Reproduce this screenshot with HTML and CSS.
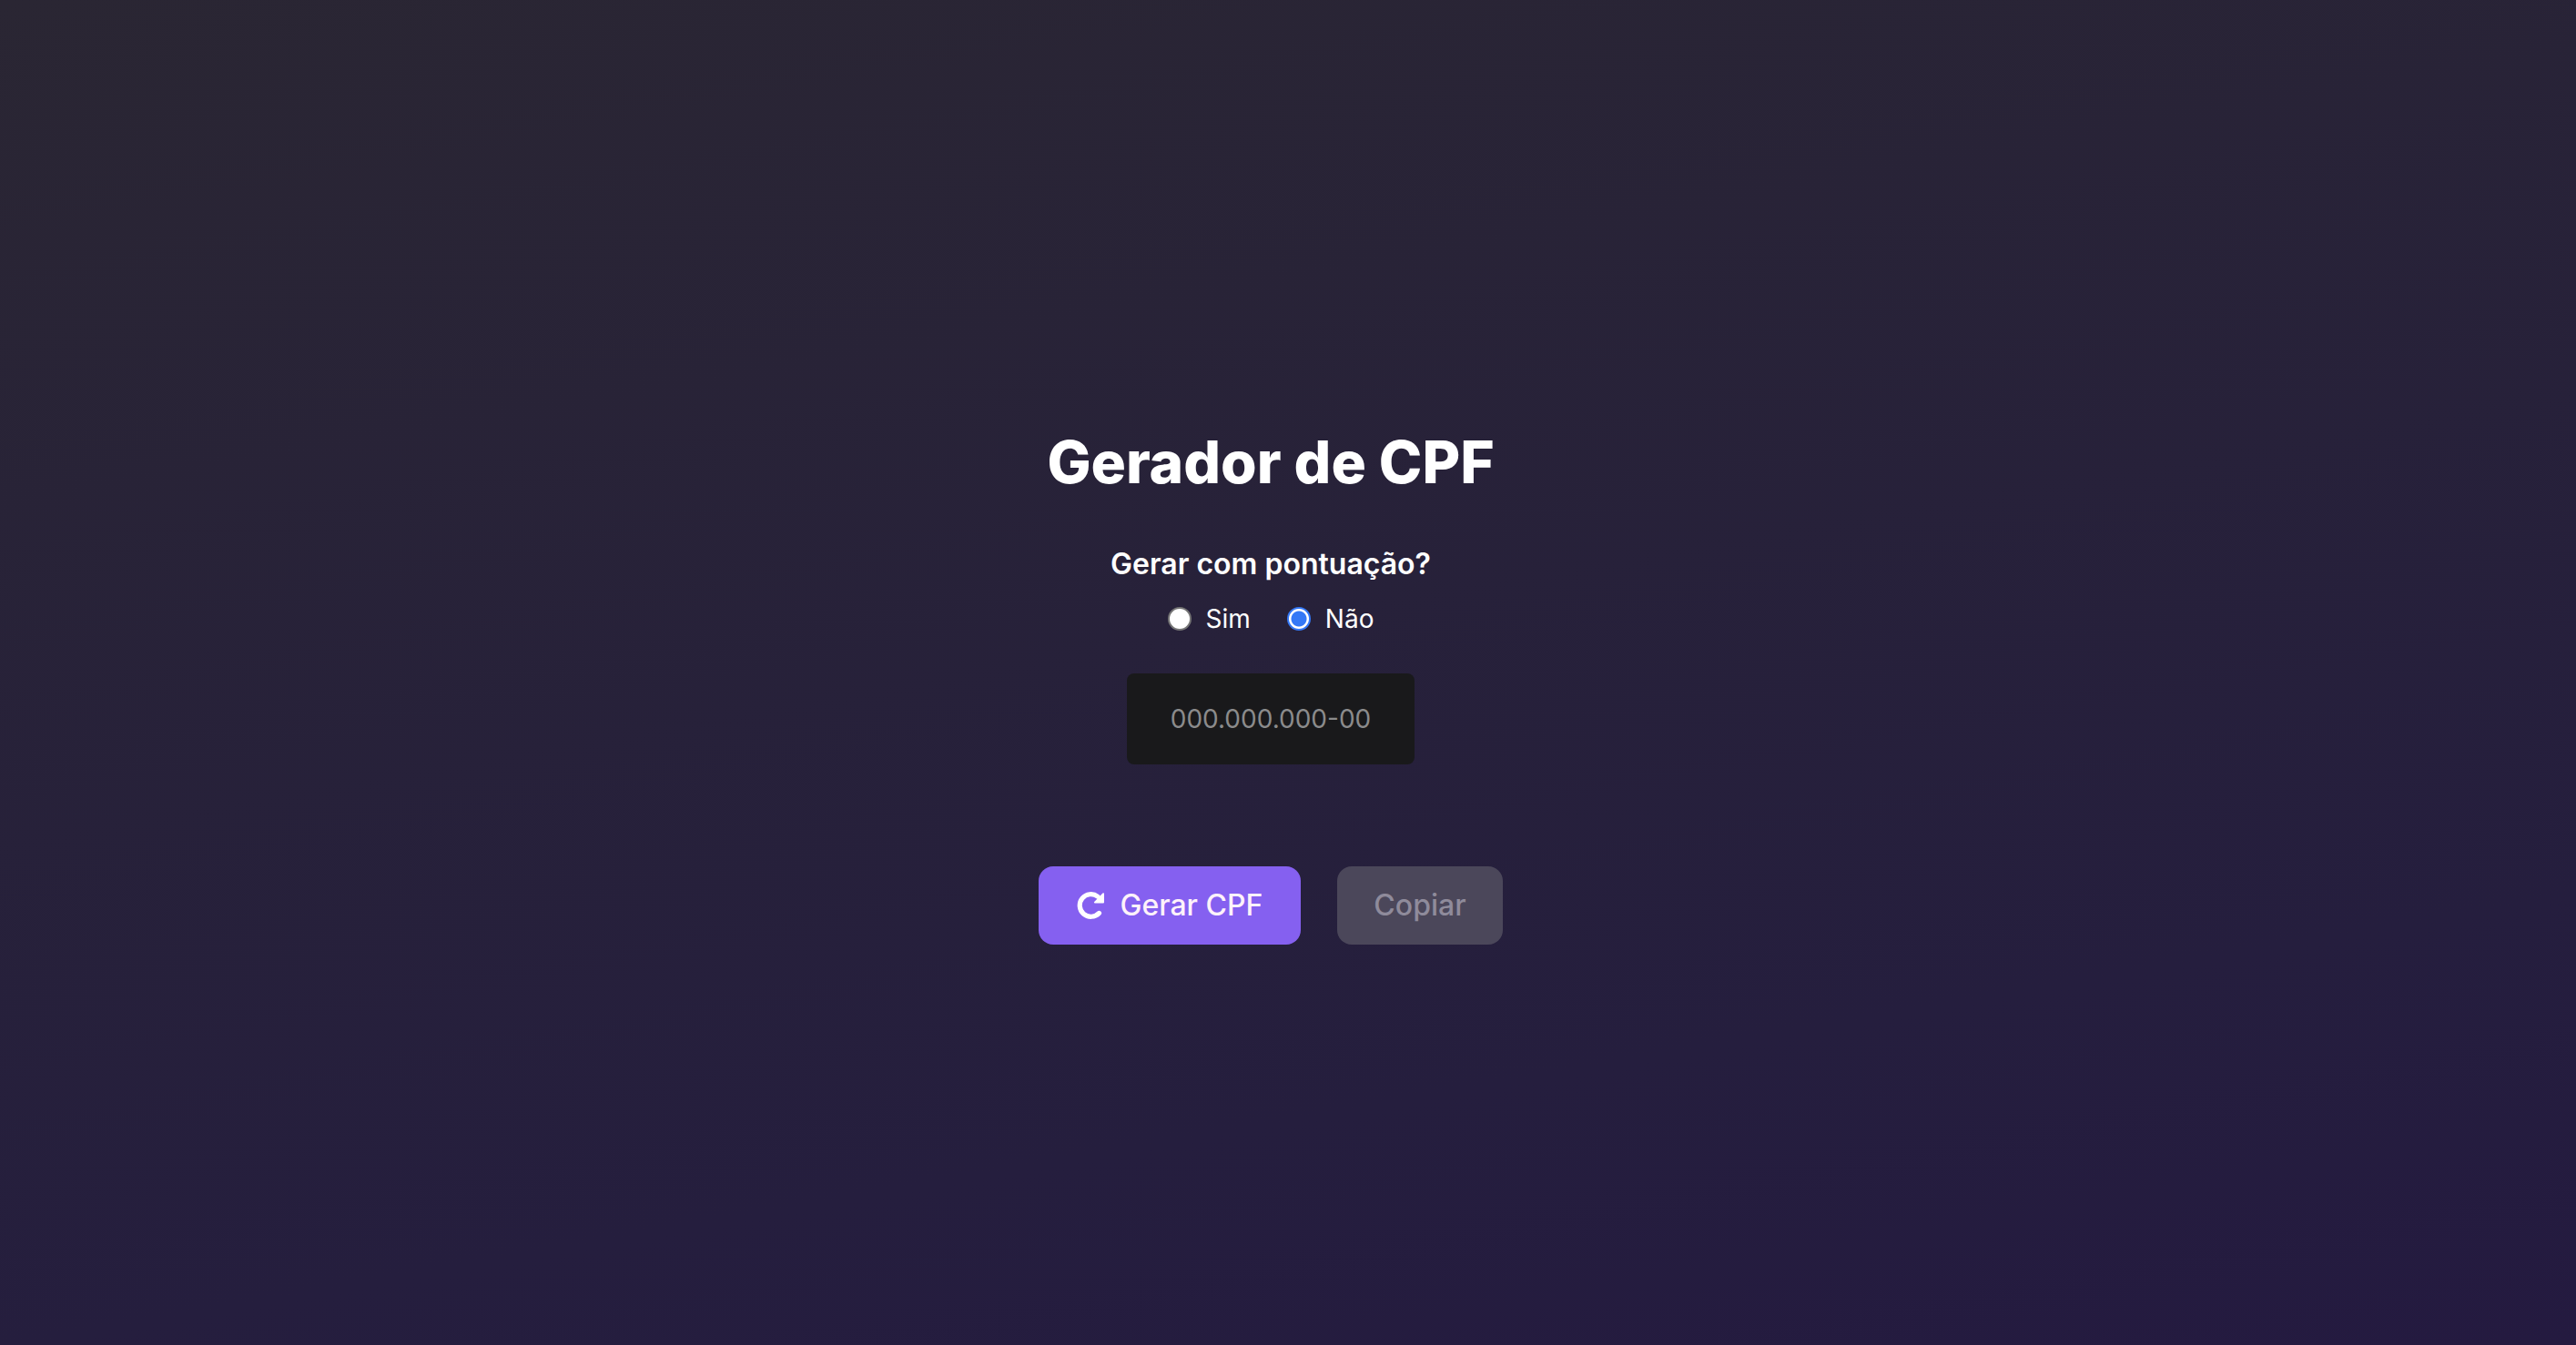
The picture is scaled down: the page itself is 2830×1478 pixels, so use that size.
FILE: index.html
```html
<!DOCTYPE html>
<html lang="pt-BR">
<head>
<meta charset="utf-8">
<meta name="viewport" content="width=device-width, initial-scale=1">
<title>Gerador de CPF</title>
<link rel="stylesheet" href="styles.css">
</head>
<body>
<main class="generator">
  <h1 class="title">Gerador de CPF</h1>
  <form class="form">
    <fieldset class="options">
      <legend class="question">Gerar com pontuação?</legend>
      <div class="choices">
        <label class="choice"><input class="radio" type="radio" name="mask" value="sim">Sim</label>
        <label class="choice"><input class="radio" type="radio" name="mask" value="nao" checked>Não</label>
      </div>
    </fieldset>
    <input class="cpf" type="text" placeholder="000.000.000-00" aria-label="CPF gerado" readonly>
    <div class="actions">
      <button class="button primary" type="button">
        <svg class="icon" viewBox="0 0 30 30" aria-hidden="true">
          <path d="M24.5 23.4A12.3 12.3 0 1 1 23 5.2" fill="none" stroke="currentColor" stroke-width="5.2" stroke-linecap="round"/>
          <path d="M28.4 1.5Q30 .6 30 2.2V11.4Q30 12.4 29 12.4H19.8Q18.1 12.3 19.2 11Z" fill="currentColor"/>
        </svg>
        Gerar CPF
      </button>
      <button class="button secondary" type="button" disabled>Copiar</button>
    </div>
  </form>
</main>
</body>
</html>
```
FILE: styles.css
```css
* {
  box-sizing: border-box;
}

body {
  margin: 0;
  min-height: 100vh;
  display: flex;
  align-items: center;
  justify-content: center;
  padding: 0 38px 0 0;
  background: linear-gradient(170deg, #2a2633, #251e3e 75%, #241a40);
  color: #fff;
  font-family: Inter, "Liberation Sans", sans-serif;
}

.generator,
.form {
  display: flex;
  flex-direction: column;
  align-items: center;
}

.generator {
  padding-top: 28px;
}

.title {
  margin: 0 0 52px;
  font-size: 64px;
  font-weight: 800;
  line-height: 80px;
}

.options {
  display: flex;
  flex-direction: column;
  align-items: center;
  margin: 0 0 40px;
  padding: 0;
  border: 0;
}

.question {
  padding: 0;
  font-size: 32px;
  font-weight: 600;
  line-height: 40px;
}

.choices {
  display: flex;
  gap: 40px;
  margin-top: 20px;
}

.choice {
  display: flex;
  align-items: center;
  gap: 16px;
  font-size: 28px;
  line-height: 40px;
}

.radio {
  appearance: none;
  width: 26px;
  height: 26px;
  margin: 0;
  border: 2px solid #767676;
  border-radius: 50%;
  background: #fff;
}

.radio:checked {
  border-color: #3478f6;
  background: radial-gradient(circle, #3478f6 8px, #fff 9px);
}

.cpf {
  width: 316px;
  height: 100px;
  margin: 0 0 112px;
  padding: 0 32px;
  border: 0;
  border-radius: 8px;
  background: #19191b;
  color: #fff;
  font: 400 28px/40px Inter, "Liberation Sans", sans-serif;
  text-align: center;
}

.cpf::placeholder {
  color: #8b8b8c;
  opacity: 1;
}

.actions {
  display: flex;
  gap: 40px;
}

.button {
  display: flex;
  align-items: center;
  gap: 16px;
  height: 86px;
  padding: 0 40px;
  border: 0;
  border-radius: 16px;
  font: 500 32px/40px Inter, "Liberation Sans", sans-serif;
}

.primary {
  gap: 17px;
  padding: 0 42px;
  background: #8560f0;
  color: #fff2fa;
}

.secondary {
  background: #4b475a;
  color: #8f8b9b;
}

.icon {
  width: 30px;
  height: 30px;
  color: #fff;
}
```
